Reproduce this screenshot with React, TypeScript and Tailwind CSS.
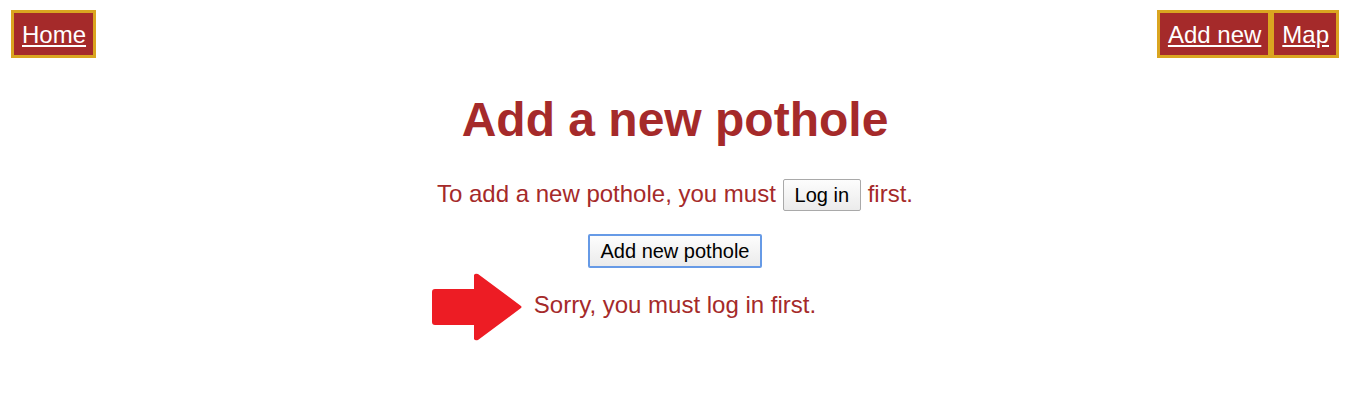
import React from "react";

const navLink =
  "border-3 border-[#daa520] bg-[#a52a2a] pt-2 pr-[7px] pb-1.5 pl-2 text-2xl leading-7 text-white underline";

const buttonFace =
  "rounded-xs bg-linear-to-b from-[#fdfdfd] to-[#ebebeb] text-xl leading-6 text-black";

export default function App() {
  return (
    <div className="pt-2.5 pr-[7px] pb-12 pl-[11px] font-['Liberation_Sans',sans-serif] text-[#a52a2a]">
      <nav className="flex justify-between">
        <a href="#home" className={navLink}>Home</a>
        <div className="flex">
          <a href="#add" className={navLink}>Add new</a>
          <a href="#map" className={navLink}>Map</a>
        </div>
      </nav>
      <main className="flex flex-col items-center pt-8.5 text-2xl">
        <h1 className="text-5xl leading-14 font-bold">Add a new pothole</h1>
        <p className="pt-7.5">
          To add a new pothole, you must{" "}
          <button type="button" className={`${buttonFace} h-8 border border-[#a9a9a9] px-[11px]`}>
            Log in
          </button>{" "}
          first.
        </p>
        <button type="button" className={`${buttonFace} mt-[23px] h-[34px] border-2 border-[#669ae6] px-2.5`}>
          Add new pothole
        </button>
        <div className="relative mt-[21px]">
          <svg className="absolute -top-4 right-full mr-3 h-17 w-[90px]" viewBox="0 0 90 68" aria-hidden="true">
            <path d="M3 16H42V2Q43 0 46 1L89 33Q90 34 89 35L46 67Q43 68 42 66V52H3Q0 52 0 49V19Q0 16 3 16Z" fill="#ed1c24" />
          </svg>
          <p role="status">Sorry, you must log in first.</p>
        </div>
      </main>
    </div>
  );
}
